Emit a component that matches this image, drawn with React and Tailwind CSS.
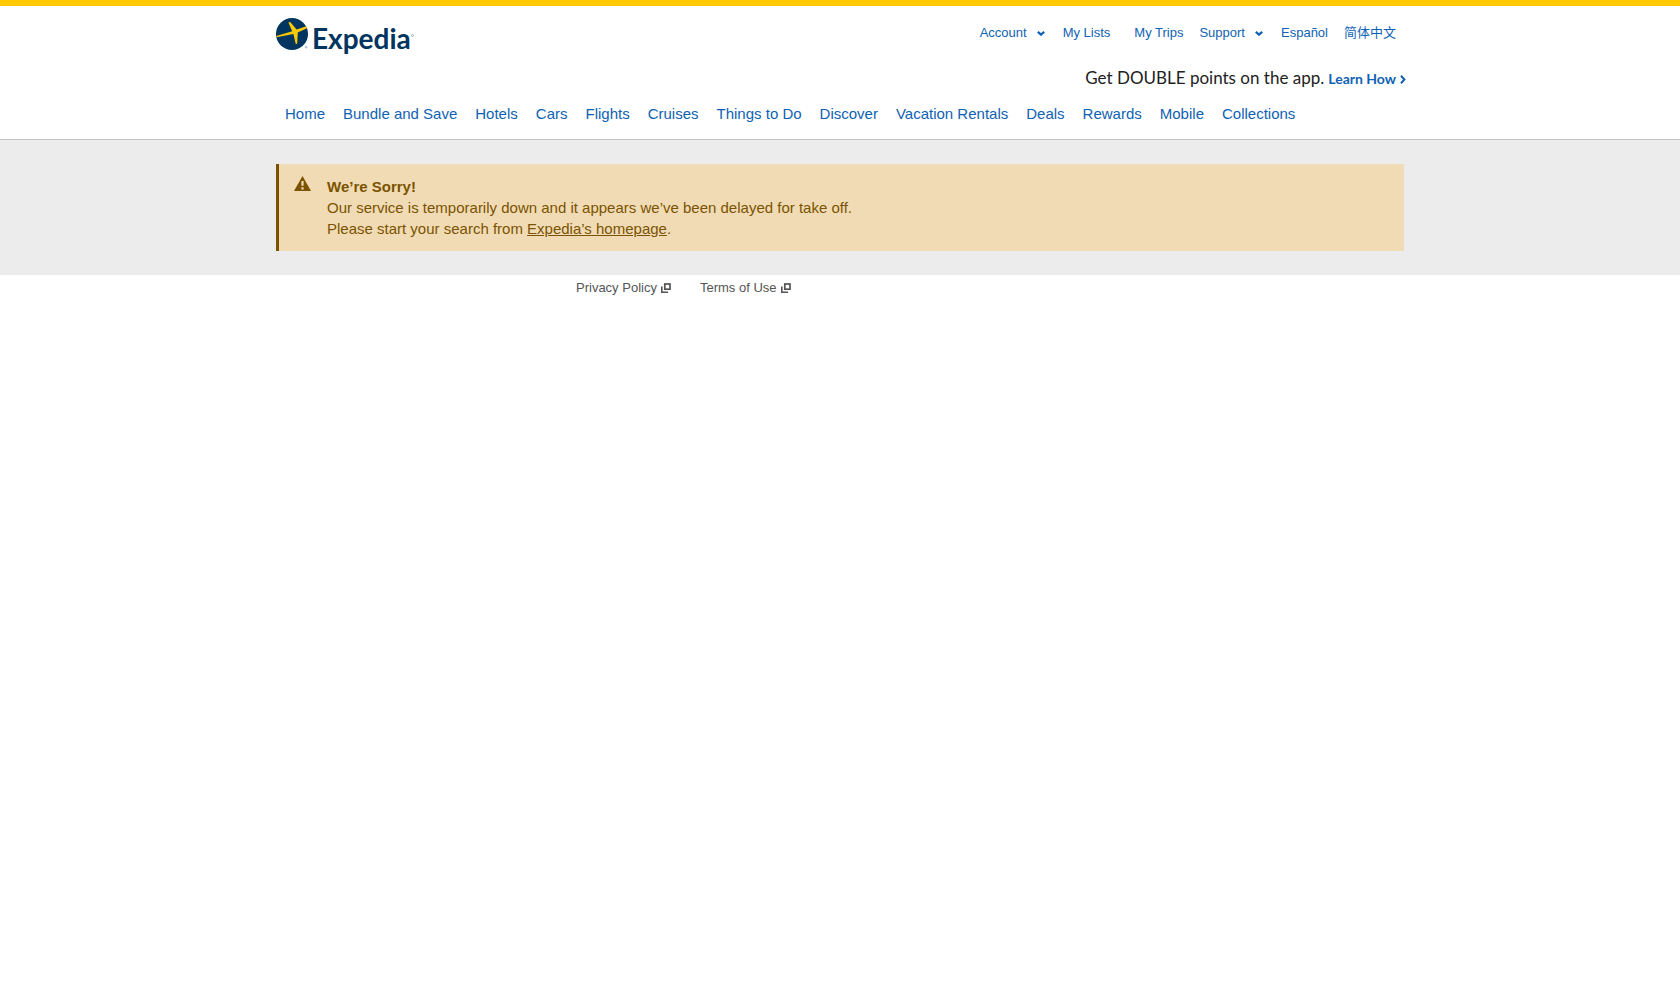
const navItems = [
  'Home', 'Bundle and Save', 'Hotels', 'Cars', 'Flights', 'Cruises', 'Things to Do',
  'Discover', 'Vacation Rentals', 'Deals', 'Rewards', 'Mobile', 'Collections',
];

function Chevron() {
  return (
    <svg aria-hidden="true" className="h-[5px] w-2" viewBox="0 0 8 5" fill="none" stroke="currentColor" strokeWidth="2.2">
      <path d="M0.8 0.8 L4 3.6 L7.2 0.8" />
    </svg>
  );
}

function Logo() {
  return (
    <a href="#home" aria-label="Expedia" className="flex items-start text-[#00355f]">
      <svg aria-hidden="true" className="h-8 w-8 overflow-visible" viewBox="0 0 32 32">
        <circle cx="16" cy="16" r="16" fill="#00355f" />
        <path
          d="M0.4 18 L16.2 13.2 L12.4 4.4 L14.2 4 L20.6 11.6 L29.6 8.6 Q31.8 8.8 30.4 10.4 L21.8 14.6 L21.2 25.4 L19.8 26.2 L17.4 16 L0.6 19.2 Z"
          fill="#ffcb05"
        />
        <circle cx="30.2" cy="29.2" r="0.9" fill="none" stroke="#7f9aaf" strokeWidth="0.7" />
      </svg>
      <span className="mt-1 ml-1 font-['Lato',sans-serif] text-[28px] leading-8 font-bold">Expedia</span>
      <svg aria-hidden="true" className="mt-4 h-[3px] w-[3px]" viewBox="0 0 3 3">
        <circle cx="1.5" cy="1.5" r="1" fill="none" stroke="#7f9aaf" strokeWidth="0.7" />
      </svg>
    </a>
  );
}

function NewWindow() {
  return (
    <svg aria-hidden="true" className="h-[10px] w-[10px]" viewBox="0 0 10 10" fill="none" stroke="currentColor">
      <rect x="3.8" y="1" width="5.2" height="5.2" strokeWidth="1.7" />
      <path d="M0.8 3.6 V9.2 H7" strokeWidth="1.6" />
    </svg>
  );
}

export default function App() {
  return (
    <div className="border-t-[6px] border-[#ffcb00] bg-white font-['Liberation_Sans','Noto_Sans_CJK_SC',sans-serif]">
      <header className="border-b border-[#c4c4c4] pb-[13px] text-[#0f62b3]">
        <div className="mx-auto max-w-[1128px]">
          <div className="flex items-start justify-between pt-3">
            <Logo />
            <div className="flex items-center pt-[5px] pr-2 text-[13px] leading-5">
              <button type="button" className="mr-[18px] flex items-center gap-[10px]">Account <Chevron /></button>
              <a href="#lists" className="mr-6">My Lists</a>
              <a href="#trips" className="mr-4">My Trips</a>
              <button type="button" className="mr-[18px] flex items-center gap-[10px]">Support <Chevron /></button>
              <a href="#es" className="mr-4">Español</a>
              <a href="#zh" lang="zh">简体中文</a>
            </div>
          </div>
          <div className="mt-3 -mr-0.5 flex items-baseline justify-end gap-1 font-['Lato',sans-serif] leading-6">
            <span className="text-[17px] text-[#222222]">Get DOUBLE points on the app.</span>
            <a href="#points" className="flex items-center gap-1 text-[14px] font-bold">
              Learn How
              <svg aria-hidden="true" className="h-[9px] w-[6px]" viewBox="0 0 6 9" fill="none" stroke="currentColor" strokeWidth="2">
                <path d="M1 0.8 L4.4 4.5 L1 8.2" />
              </svg>
            </a>
          </div>
          <nav className="mt-[11px] flex gap-[18px] px-[9px] text-[15px] leading-6">
            {navItems.map((item) => (
              <a key={item} href="#nav">{item}</a>
            ))}
          </nav>
        </div>
      </header>
      <main className="bg-[#ececec] py-6">
        <div role="alert" className="mx-auto flex max-w-[1128px] gap-4 border-l-[3px] border-[#7b5300] bg-[#f0dbb5] py-3 pl-[15px] text-[15px] leading-[21px] text-[#7b5300]">
          <svg aria-hidden="true" className="h-[15px] w-[17px]" viewBox="0 0 17 15">
            <path d="M8.5 0 L17 15 H0 Z" fill="currentColor" />
            <path d="M7.4 5 H9.6 V9.8 H7.4 Z M7.4 11.2 H9.6 V13.4 H7.4 Z" fill="#f0dbb5" />
          </svg>
          <div>
            <h1 className="font-bold">We’re Sorry!</h1>
            <p>Our service is temporarily down and it appears we’ve been delayed for take off.</p>
            <p>Please start your search from <a href="#home" className="underline">Expedia’s homepage</a>.</p>
          </div>
        </div>
      </main>
      <footer className="mx-auto flex max-w-[1128px] gap-[29px] pt-[3px] pl-[300px] text-[13px] leading-5 text-[#555555]">
        <a href="#privacy" className="flex items-center gap-1">Privacy Policy <NewWindow /></a>
        <a href="#terms" className="flex items-center gap-1">Terms of Use <NewWindow /></a>
      </footer>
    </div>
  );
}
